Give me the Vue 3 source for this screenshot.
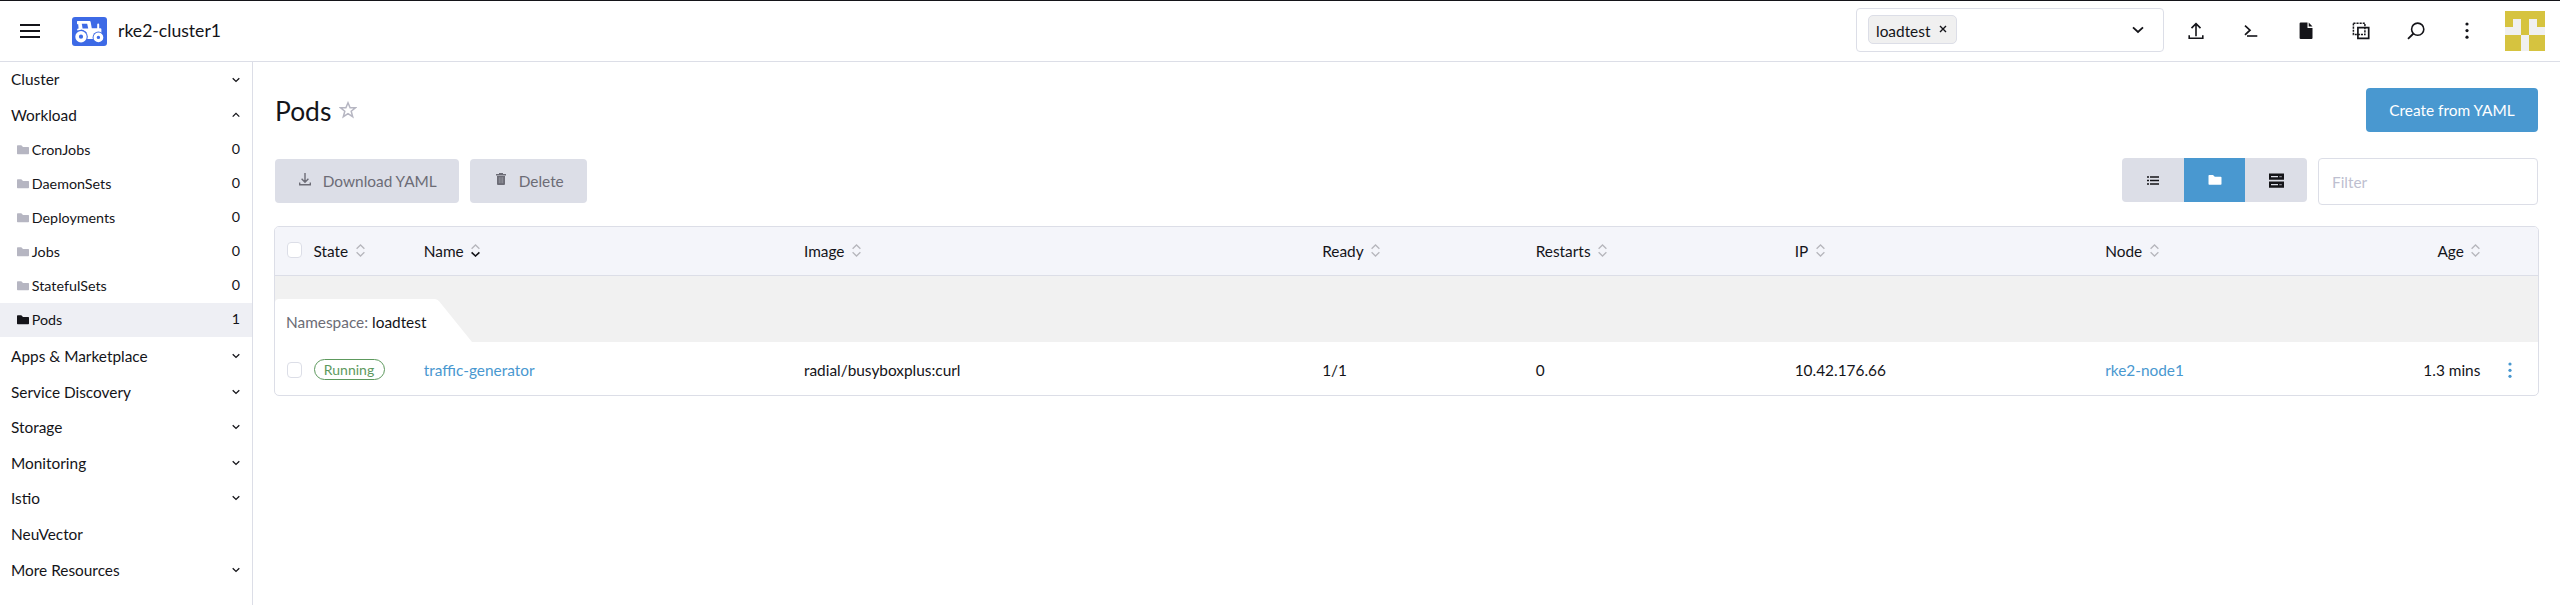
<script setup>
const workloads = [
  { name: 'CronJobs', count: 0 },
  { name: 'DaemonSets', count: 0 },
  { name: 'Deployments', count: 0 },
  { name: 'Jobs', count: 0 },
  { name: 'StatefulSets', count: 0 },
  { name: 'Pods', count: 1, active: true },
]
const groups = [
  { name: 'Apps & Marketplace', chevron: true },
  { name: 'Service Discovery', chevron: true },
  { name: 'Storage', chevron: true },
  { name: 'Monitoring', chevron: true },
  { name: 'Istio', chevron: true },
  { name: 'NeuVector', chevron: false },
  { name: 'More Resources', chevron: true },
]
const columns = ['State', 'Name', 'Image', 'Ready', 'Restarts', 'IP', 'Node', 'Age']
</script>

<template>
  <div class="page">
    <header class="topbar">
      <svg class="burger" width="20" height="14" viewBox="0 0 20 14"><path d="M0 1h20M0 7h20M0 13h20" stroke="#141419" stroke-width="2" /></svg>
      <svg class="logo" width="35" height="29" viewBox="0 0 35 29">
        <rect width="35" height="29" rx="3" fill="#3d6ae6" />
        <path d="M5 4.5Q5 4 5.6 4H17.6Q18.4 4 18.6 4.8L19.8 11.2H25.2V7.6Q25.2 6.6 26.2 6.6T27.2 7.6V11.2H28.4Q29.4 11.2 29.4 12.2V17.5H15.5Q14 13.5 9.5 12.6L7.3 13.2Q5.6 14 5.2 13V12Q5.2 11.4 6.6 11.4L6.2 7.2H5.4Q5 7 5 6.5Z" fill="#fff" />
        <path d="M9.8 6.8h5.4l1 4.8h-5.6z" fill="#3d6ae6" />
        <path d="M14 16h10v6H14z" fill="#fff" />
        <circle cx="9" cy="19.7" r="6.8" fill="#3d6ae6" />
        <circle cx="9" cy="19.7" r="3.9" fill="none" stroke="#fff" stroke-width="3.6" />
        <circle cx="26.4" cy="20.4" r="5.8" fill="#3d6ae6" />
        <circle cx="26.4" cy="20.4" r="3.3" fill="none" stroke="#fff" stroke-width="3.2" />
      </svg>
      <div class="cluster">rke2-cluster1</div>
      <div class="ns-select">
        <span class="tag">loadtest
          <svg width="8" height="8" viewBox="0 0 8 8"><path d="M1 1l6 6M7 1L1 7" stroke="#141419" stroke-width="1.4" /></svg>
        </span>
        <svg class="caret" width="12" height="8" viewBox="0 0 12 8"><path d="M1 1.3l5 4.7 5-4.7" fill="none" stroke="#141419" stroke-width="1.8" /></svg>
      </div>
      <div class="tools">
        <svg width="18" height="18" viewBox="0 0 18 18"><path d="M9 14.300V2M4.500 6.100L9 1.600l4.500 4.500M2.200 13.300v2.900h13.600v-2.900" fill="none" stroke="#141419" stroke-width="1.600" /></svg>
        <svg width="18" height="18" viewBox="0 0 18 18"><path d="M3 3.600l5 4.600L3 12.800" fill="none" stroke="#141419" stroke-width="1.700" /><path d="M5 14h10.300" stroke="#141419" stroke-width="1.600" /></svg>
        <svg width="18" height="18" viewBox="0 0 18 18"><path d="M3.800.400h6.700v5.500h5v10.200q0 1-1 1H3.800q-1.200 0-1.200-1V1.400q0-1 1.200-1zM11.700.400l3.800 4H11.700z" fill="#141419" /></svg>
        <svg width="18" height="18" viewBox="0 0 18 18"><g fill="none" stroke="#141419"><path d="M1.400 1.200h11.500v11.400H1.400z" stroke-width="1.500" stroke-dasharray="2.100 1" /><path d="M5.900 5.600h10.800v10.700H5.900z" stroke-width="1.700" /></g></svg>
        <svg width="18" height="18" viewBox="0 0 18 18"><circle cx="10.700" cy="7.200" r="6.100" fill="none" stroke="#141419" stroke-width="1.600" /><path d="M6.500 11.500L1 16.900" stroke="#141419" stroke-width="1.800" /></svg>
      </div>
      <svg class="dots" width="4" height="18" viewBox="0 0 4 18"><g fill="#141419"><circle cx="2" cy="2" r="1.600" /><circle cx="2" cy="8.600" r="1.600" /><circle cx="2" cy="15.200" r="1.600" /></g></svg>
      <svg class="avatar" width="40" height="40" viewBox="0 0 5 5" shape-rendering="crispEdges"><path d="M0 0h5v5H0z" fill="#d6c33f" /><path d="M1 1h1v2H0V2h1zM3 1h1v1h1v1H3zM2 3h1v2H2z" fill="#f0f0f0" /></svg>
    </header>

    <div class="body">
      <nav class="side">
        <div class="group"><span>Cluster</span><svg class="chev" viewBox="0 0 8 6"><path d="M.7 1.2L4 4.4l3.3-3.2" /></svg></div>
        <div class="group"><span>Workload</span><svg class="chev" viewBox="0 0 8 6"><path d="M.7 4.6L4 1.4l3.3 3.2" /></svg></div>
        <div class="children">
          <div v-for="w in workloads" :key="w.name" class="child" :class="{ active: w.active }">
            <svg class="folder" width="12" height="10" viewBox="0 0 12 10"><path d="M0 1Q0 .3.7.3H4.3L6 1.9h5.3q.7 0 .7.7V8.500q0 .7-.7.7H.7Q0 9.200 0 8.500z" /></svg>
            <span class="label">{{ w.name }}</span><span class="count">{{ w.count }}</span>
          </div>
        </div>
        <div v-for="g in groups" :key="g.name" class="group">
          <span>{{ g.name }}</span>
          <svg v-if="g.chevron" class="chev" viewBox="0 0 8 6"><path d="M.7 1.2L4 4.4l3.3-3.2" /></svg>
        </div>
      </nav>

      <main class="main">
        <div class="title-row">
          <h1>Pods</h1>
          <svg class="star" width="18" height="18" viewBox="0 0 18 18"><path d="M9 1.800l2.100 5h5.300l-4.200 3.400 1.500 5.500L9 12.600l-4.700 3.100 1.500-5.500L1.600 6.800h5.300z" fill="none" stroke="#b6b6c2" stroke-width="1.500" /></svg>
          <button class="btn primary">Create from YAML</button>
        </div>

        <div class="actions">
          <button class="btn muted download">
            <svg width="12" height="13" viewBox="0 0 12 13"><path d="M6 0v9M2.600 5.800L6 9.200l3.400-3.400M.7 9.500v2.300h10.600V9.500" fill="none" stroke="#6c6c76" stroke-width="1.400" /></svg>
            Download YAML
          </button>
          <button class="btn muted delete">
            <svg width="10" height="12" viewBox="0 0 10 12"><path d="M0 1h3V0h4v1h3v1.500H0zM1 3h8v8q0 1-1 1H2q-1 0-1-1z" fill="#6c6c76" /><path d="M3.300 4.200v6M5 4.200v6M6.700 4.200v6" stroke="#a9abb4" stroke-width=".6" /></svg>
            Delete
          </button>
          <div class="views">
            <span><svg width="12" height="9" viewBox="0 0 12 9"><path d="M0 1h2M3 1h9M0 4.500h2M3 4.500h9M0 8h2M3 8h9" stroke="#141419" stroke-width="1.500" /></svg></span>
            <span class="on"><svg width="14" height="10" viewBox="0 0 14 10"><path d="M.5.800Q.5 0 1.300 0H5L6.800 1.700h5.900q.8 0 .8.8V9q0 .8-.8.8H1.300Q.5 9.800.5 9z" fill="#fff" /></svg></span>
            <span><svg width="15" height="15" viewBox="0 0 15 15"><path d="M0 .5h15v6.300H0zM0 8.500h15v6.300H0z" fill="#141419" /><path d="M2 3.700h7M2 11.700h7" stroke="#dcdee7" stroke-width="1.200" /><path d="M10.300 3.700h2.500M10.300 11.700h2.500" stroke="#8a8a92" stroke-width="1.200" /></svg></span>
          </div>
          <input class="filter" placeholder="Filter" />
        </div>

        <section class="table">
          <div class="row head">
            <span class="check"></span>
            <span v-for="c in columns" :key="c" class="cell" :class="{ right: c === 'Age' }">{{ c }}
              <svg class="sort" width="9" height="13" viewBox="0 0 9 13"><g fill="none" stroke-width="1.300"><path d="M.6 4.700l3.900-3.700 3.900 3.700" stroke="#b6b6bc" /><path d="M.6 8.300L4.500 12l3.900-3.700" :stroke="c === 'Name' ? '#141419' : '#b6b6bc'" :stroke-width="c === 'Name' ? 1.6 : 1.3" /></g></svg>
            </span>
          </div>
          <div class="group-band">
            <div class="group-tab"><span class="key">Namespace:</span> loadtest</div>
            <svg class="slope" width="38" height="43" viewBox="0 0 38 43"><path d="M0 0Q2.500 0 4.300 2.500L37 43H0z" fill="#fff" /></svg>
          </div>
          <div class="row data">
            <span class="check"></span>
            <span class="cell"><span class="badge">Running</span></span>
            <a class="cell link">traffic-generator</a>
            <span class="cell">radial/busyboxplus:curl</span>
            <span class="cell">1/1</span>
            <span class="cell">0</span>
            <span class="cell">10.42.176.66</span>
            <a class="cell link">rke2-node1</a>
            <span class="cell right">1.3 mins</span>
            <svg class="row-dots" width="4" height="16" viewBox="0 0 4 16"><g fill="#4998d0"><circle cx="2" cy="2" r="1.600" /><circle cx="2" cy="8.300" r="1.600" /><circle cx="2" cy="14.300" r="1.600" /></g></svg>
          </div>
        </section>
      </main>
    </div>
  </div>
</template>

<style>
body { margin: 0; background: #fff; }
</style>

<style scoped>
* { box-sizing: border-box; }
.page { width: 2560px; height: 605px; display: flex; flex-direction: column; overflow: hidden; font: 15.4px/20px Lato, sans-serif; color: #141419; background: #fff; }
svg { display: block; flex: none; }
.topbar { height: 62px; flex: none; display: flex; align-items: center; border-top: 1px solid #141419; border-bottom: 1px solid #dcdee7; padding: 0 15px 0 20px; }
.logo { margin-left: 32px; }
.cluster { margin-left: 11px; font-size: 17.6px; }
.ns-select { margin-left: auto; width: 308px; height: 44px; margin-top: -2px; border: 1px solid #dcdee7; border-radius: 4px; display: flex; align-items: center; justify-content: space-between; padding: 0 19px 0 11px; }
.tag { height: 29px; width: 89px; margin-top: -1px; padding: 2px 9px 0 7px; background: #f0f0f0; border: 1px solid #dcdee7; border-radius: 5px; display: flex; align-items: center; justify-content: space-between; }
.tag svg { margin-top: -3px; }
.caret { margin-top: -1px; }
.tools { display: flex; gap: 37px; margin-left: 23px; }
.dots { margin-left: 39.500px; }
.avatar { margin-left: 36.500px; }
.body { flex: 1; display: flex; min-height: 0; }
.side { width: 253px; border-right: 1px solid #dcdee7; }
.group { height: 35.6px; padding: 0 12px 0 11px; display: flex; align-items: center; justify-content: space-between; }
.group:first-child span { margin-top: -1px; }
.chev { width: 8px; height: 6px; fill: none; stroke: #141419; stroke-width: 1.3; }
.children { padding: .3px 0 1.400px; }
.child { height: 33.9px; padding: 0 12px 0 16.500px; display: flex; align-items: center; font-size: 14.3px; }
.child.active { background: #eeeff4; }
.folder { fill: #b6b6c2; margin-right: 3.300px; }
.active .folder { fill: #141419; }
.count { margin-left: auto; margin-top: -2px; }
.main { flex: 1; padding: 26px 21px 0 21px; }
.title-row { display: flex; align-items: center; height: 44px; padding-right: 1px; }
h1 { margin: 0; font-size: 26.4px; line-height: 32px; font-weight: 400; padding: 1px 0 0 1px; }
.star { margin-left: 8px; margin-top: -1px; }
.btn { height: 44px; border: 0; border-radius: 4px; font: inherit; display: flex; align-items: center; justify-content: center; padding: 0; }
.primary { margin-left: auto; width: 172px; background: #4998d0; color: #fff; }
.muted { background: #dcdee7; color: #6c6c76; }
.muted svg { margin-top: -4px; }
.download { width: 184px; gap: 12px; margin-left: 1px; padding-left: 1.500px; }
.delete { width: 117px; gap: 12.500px; margin-left: 11px; padding-left: 3px; }
.actions { display: flex; margin-top: 26px; height: 68px; align-items: flex-start; padding: 1px 1px 0 0; }
.views { margin-left: auto; display: flex; height: 44px; margin-top: -1px; border-radius: 4px; overflow: hidden; background: #dcdee7; }
.views span { width: 62px; display: flex; align-items: center; justify-content: center; }
.views span.on { width: 61px; background: #4998d0; }
.filter { margin: -1px 0 0 11px; width: 220px; height: 47px; border: 1px solid #dcdee7; border-radius: 4px; padding: 0 13px; font: inherit; background: #fff; }
.filter::placeholder { color: #bebfd0; opacity: 1; }
.table { width: 2265px; border: 1px solid #dcdee7; border-radius: 5px; overflow: hidden; }
.row { display: grid; grid-template-columns: 38.500px 110.300px 380.200px 518.200px 213.500px 259px 310.500px 300px 75.200px 28px 30px; align-items: center; }
.head { height: 49px; background: #f4f5fa; border-bottom: 1px solid #dcdee7; padding-bottom: 1px; }
.head .check { margin-top: -1px; }
.data { height: 53px; padding-top: 2px; }
.cell { display: flex; align-items: center; }
.right { justify-content: flex-end; }
.sort { margin-left: 7.500px; margin-top: -1px; }
.check { width: 15px; height: 16px; margin-left: 12px; background: #fff; border: 1px solid #dcdee7; border-radius: 4px; }
.group-band { height: 66px; background: #f1f1f1; display: flex; align-items: flex-end; }
.group-tab { height: 43px; padding: 0 0 0 11px; width: 160px; background: #fff; border-top-left-radius: 4px; line-height: 46px; white-space: nowrap; }
.key { color: #6c6c76; }
.badge { height: 21px; width: 71px; border: 1px solid #5d995d; border-radius: 11px; color: #5d995d; font-size: 14px; line-height: 19px; text-align: center; }
.link { color: #4998d0; }
.row-dots { margin-left: 27.400px; }
</style>
